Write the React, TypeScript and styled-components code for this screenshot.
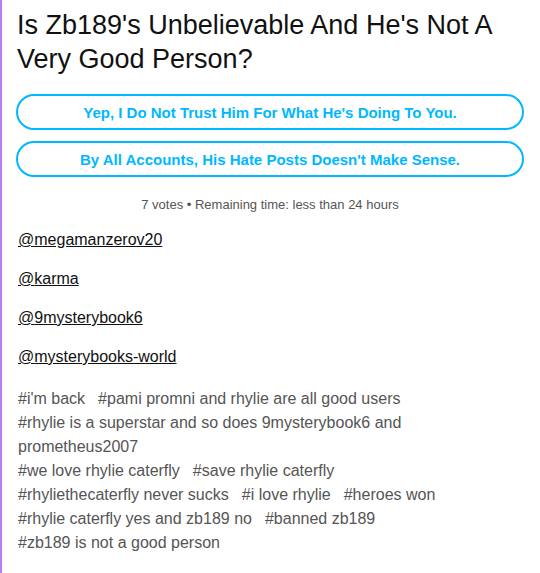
import React from 'react';
import styled, { createGlobalStyle } from 'styled-components';

const GlobalStyle = createGlobalStyle`
  html, body {
    margin: 0;
    padding: 0;
    background: #ffffff;
  }
  body {
    font-family: "Liberation Sans", Arial, sans-serif;
  }
`;

const Page = styled.div`
  min-height: 573px;
  box-sizing: border-box;
  border-left: 2px solid #b57ef5;
  padding: 8px 16px 20px 14px;
`;

const Title = styled.h1`
  margin: 0;
  font-size: 27px;
  line-height: 34px;
  font-weight: 400;
  color: #111;
  padding-left: 1px;
`;

const Options = styled.div`
  display: flex;
  flex-direction: column;
  gap: 11px;
  margin-top: 18px;
`;

const Option = styled.button`
  height: 36px;
  border: 2px solid #00b8ff;
  border-radius: 18px;
  background: #fff;
  color: #00b8ff;
  font-family: "Liberation Sans", Arial, sans-serif;
  font-size: 15px;
  font-weight: 700;
  cursor: pointer;
`;

const Votes = styled.div`
  text-align: center;
  font-size: 13px;
  color: #555;
  margin-top: 20px;
`;

const Mentions = styled.div`
  display: flex;
  flex-direction: column;
  gap: 19px;
  margin-top: 18px;
  padding-left: 2px;
`;

const Mention = styled.a`
  font-size: 16px;
  line-height: 20px;
  color: #111;
  text-decoration: underline;
  align-self: flex-start;
`;

const Tags = styled.div`
  margin-top: 20px;
  padding-left: 2px;
  width: 460px;
  font-size: 16px;
  line-height: 24px;
  color: #555;
`;

const Tag = styled.span`
  display: inline-block;
  margin-right: 13px;
`;

const options = [
  "Yep, I Do Not Trust Him For What He's Doing To You.",
  "By All Accounts, His Hate Posts Doesn't Make Sense.",
];

const mentions = ['megamanzerov20', 'karma', '9mysterybook6', 'mysterybooks-world'];

const tags = [
  "i'm back",
  'pami promni and rhylie are all good users',
  'rhylie is a superstar and so does 9mysterybook6 and prometheus2007',
  'we love rhylie caterfly',
  'save rhylie caterfly',
  'rhyliethecaterfly never sucks',
  'i love rhylie',
  'heroes won',
  'rhylie caterfly yes and zb189 no',
  'banned zb189',
  'zb189 is not a good person',
];

const App: React.FC = () => {
  return (
    <>
      <GlobalStyle />
      <Page>
        <Title>Is Zb189's Unbelievable And He's Not A Very Good Person?</Title>
        <Options>
          {options.map((o) => (
            <Option key={o} type="button">
              {o}
            </Option>
          ))}
        </Options>
        <Votes>7 votes • Remaining time: less than 24 hours</Votes>
        <Mentions>
          {mentions.map((m) => (
            <Mention key={m} href="#">
              @{m}
            </Mention>
          ))}
        </Mentions>
        <Tags>
          {tags.map((t) => (
            <Tag key={t}>#{t}</Tag>
          ))}
        </Tags>
      </Page>
    </>
  );
};

export default App;
